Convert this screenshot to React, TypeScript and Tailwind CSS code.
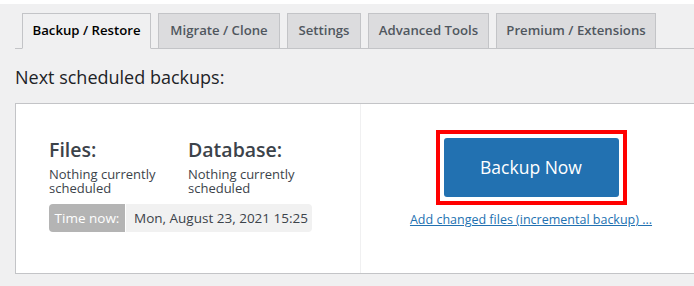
import React from "react";

const tabs = [
  { label: "Backup / Restore", w: "w-[129px]", active: true },
  { label: "Migrate / Clone", w: "w-[122px]" },
  { label: "Settings", w: "w-[74px]" },
  { label: "Advanced Tools", w: "w-[121px]" },
  { label: "Premium / Extensions", w: "w-[160px]" },
];

export default function App() {
  return (
    <div
      className="w-[694px] h-[286px] overflow-hidden bg-[#f0f0f1] text-[#3c434a]"
      style={{ fontFamily: '"Open Sans", "Noto Sans", sans-serif' }}
    >
      <div className="h-[4px] bg-white" />
      {/* tabs */}
      <div className="mt-[9px] ml-[15px] flex border-b border-[#c3c4c7] pl-[7px] gap-[7px]">
        {tabs.map((t) => (
          <div
            key={t.label}
            className={
              "h-[36px] -mb-px flex items-center justify-center border border-[#c3c4c7] text-[13.2px] font-semibold shrink-0 " +
              t.w +
              (t.active
                ? " bg-[#f0f0f1] text-black border-b-[#f0f0f1]"
                : " bg-[#dcdcde] text-[#50575e]")
            }
          >
            {t.label}
          </div>
        ))}
      </div>
      <h2 className="ml-[15px] mt-[16px] text-[18px] leading-[24px] font-medium text-[#1d2327]">
        Next scheduled backups:
      </h2>
      {/* panel */}
      <div className="ml-[15px] mt-[14px] w-[687px] h-[171px] bg-white border border-[#c3c4c7] flex">
        <div className="w-[345px] border-r border-[#f0f0f1] pl-[33px] pt-[33px]">
          <div className="flex">
            <div className="w-[139px]">
              <div className="text-[19.5px] leading-[26px] font-semibold text-[#3c434a]">Files:</div>
              <div className="mt-[4px] text-[13px] leading-[14px]">
                Nothing currently
                <br />
                scheduled
              </div>
            </div>
            <div>
              <div className="text-[19.5px] leading-[26px] font-semibold text-[#3c434a]">Database:</div>
              <div className="mt-[4px] text-[13px] leading-[14px]">
                Nothing currently
                <br />
                scheduled
              </div>
            </div>
          </div>
          <div className="mt-[9px] flex h-[28px] text-[13.5px]">
            <div className="w-[77px] bg-[#b4b4b4] text-white rounded-l-[4px] flex items-center justify-center border-r border-white">
              Time now:
            </div>
            <div className="w-[186px] bg-[#f1f1f1] rounded-r-[4px] flex items-center pl-[8px] text-[#3c434a]">
              Mon, August 23, 2021 15:25
            </div>
          </div>
        </div>
        <div className="flex-1 flex flex-col items-center pt-[26px]">
          <div className="border-[4px] border-[#ff0000] p-[4px]">
            <button className="w-[175px] h-[59px] bg-[#2271b1] rounded-[3px] text-white text-[17.5px]">
              Backup Now
            </button>
          </div>
          <a className="mt-[7px] text-[12.5px] leading-[16px] text-[#2271b1] underline">
            Add changed files (incremental backup) ...
          </a>
        </div>
      </div>
    </div>
  );
}
